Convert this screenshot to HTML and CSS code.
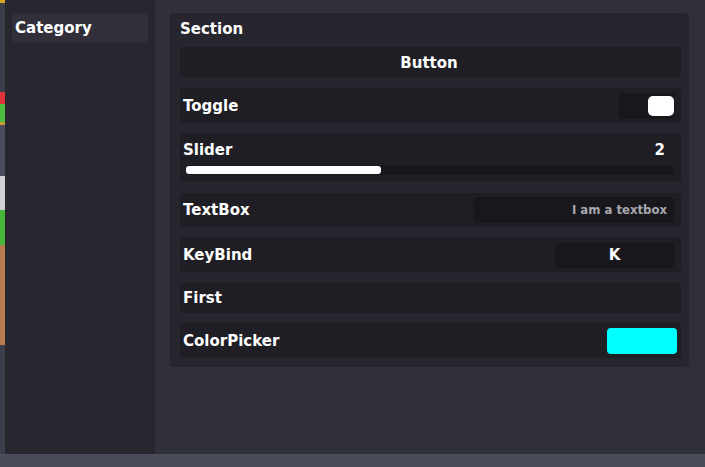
FILE: index.html
```html
<!DOCTYPE html>
<html>
<head>
<meta charset="utf-8">
<link rel="stylesheet" href="styles.css">
</head>
<body>
<div class="screen">
  <div class="game-strip"></div>
  <div class="window">
    <aside class="sidebar">
      <div class="category">Category</div>
    </aside>
    <main class="content">
      <section class="section">
        <div class="section-title">Section</div>
        <div class="rows">
          <div class="row row-button">Button</div>
          <div class="row row-toggle">
            <span class="label">Toggle</span>
            <div class="switch"><div class="knob"></div></div>
          </div>
          <div class="row row-slider">
            <div class="slider-head">
              <span class="label">Slider</span>
              <span class="value">2</span>
            </div>
            <div class="track"><div class="fill" style="width:40%"></div></div>
          </div>
          <div class="row row-textbox">
            <span class="label">TextBox</span>
            <div class="textbox">I am a textbox</div>
          </div>
          <div class="row row-keybind">
            <span class="label">KeyBind</span>
            <div class="keybox">K</div>
          </div>
          <div class="row row-first">
            <span class="label">First</span>
          </div>
          <div class="row row-color">
            <span class="label">ColorPicker</span>
            <div class="swatch"></div>
          </div>
        </div>
      </section>
    </main>
  </div>
</div>
<div class="taskbar"></div>
</body>
</html>
```
FILE: styles.css
```css
* { box-sizing: border-box; }
html, body {
  margin: 0;
  padding: 0;
  width: 705px;
  height: 467px;
  overflow: hidden;
  background: #4b4c5b;
  font-family: "DejaVu Sans", "Liberation Sans", sans-serif;
  font-weight: 700;
  color: #ffffff;
}
.screen {
  display: flex;
  height: 454px;
}
.game-strip {
  width: 5px;
  flex: none;
  background: linear-gradient(to bottom,
    #d9a624 0px, #d9a624 3px,
    #3b3c4a 3px, #3b3c4a 92px,
    #e0323c 92px, #e0323c 104px,
    #4cbf42 104px, #4cbf42 122px,
    #c9a034 122px, #c9a034 125px,
    #4b4c5c 125px, #4b4c5c 176px,
    #cfcfd4 176px, #cfcfd4 210px,
    #45b83c 210px, #45b83c 245px,
    #b97c4c 245px, #b97c4c 345px,
    #3c3d4b 345px, #3c3d4b 454px);
}
.window {
  flex: 1;
  display: flex;
}
.sidebar {
  width: 150px;
  flex: none;
  background: #282730;
  padding: 13px 7px;
}
.category {
  height: 30px;
  line-height: 31px;
  padding-left: 3px;
  background: #31303a;
  border-radius: 3px;
  font-size: 15px;
}
.content {
  flex: 1;
  background: #30303a;
  padding: 13px 16px 0 15px;
}
.section {
  background: #27262e;
  border-radius: 3px;
  padding: 0 8px 9px 10px;
}
.section-title {
  height: 30px;
  line-height: 32px;
  font-size: 15px;
  margin-bottom: 4px;
}
.rows {
  display: flex;
  flex-direction: column;
  gap: 11px;
}
.row {
  background: #1f1e24;
  border-radius: 3px;
  display: flex;
  align-items: center;
  justify-content: space-between;
  padding: 0 6px 0 3px;
  font-size: 15px;
}
.row-button {
  height: 30px;
  justify-content: center;
  padding-top: 1px;
}
.row-toggle { height: 35px; }
.switch {
  width: 56px;
  height: 26px;
  background: #18171c;
  border-radius: 4px;
  display: flex;
  justify-content: flex-end;
  align-items: center;
  padding: 3px 1px 3px 3px;
}
.knob {
  width: 26px;
  height: 20px;
  background: #ffffff;
  border-radius: 5px;
}
.row-slider {
  height: 48px;
  flex-direction: column;
  align-items: stretch;
  justify-content: flex-start;
  padding: 0 7px 0 3px;
}
.slider-head {
  height: 31px;
  display: flex;
  align-items: center;
  justify-content: space-between;
}
.value { padding-right: 9px; }
.track {
  margin-left: 3px;
  height: 10px;
  background: #18171c;
  border-radius: 3px;
  padding: 1px 0;
}
.fill {
  height: 8px;
  background: #ffffff;
  border-radius: 3px;
}
.row-textbox { height: 34px; padding-right: 7px; }
.textbox {
  width: 200px;
  height: 26px;
  background: #18171c;
  border-radius: 4px;
  text-align: right;
  padding-right: 7px;
  line-height: 26px;
  font-size: 11.7px;
  color: #a7a7ae;
}
.row-keybind { height: 34px; padding-right: 7px; }
.keybox {
  width: 119px;
  height: 25px;
  background: #18171c;
  border-radius: 4px;
  text-align: center;
  line-height: 25px;
  font-size: 15px;
}
.row-first { height: 30px; }
.row-color { height: 35px; padding-right: 4px; margin-top: -1px; }
.swatch {
  width: 70px;
  height: 26px;
  background: #00ffff;
  border-radius: 4px;
}
.taskbar {
  height: 13px;
  background: #4b4c5b;
}
```
